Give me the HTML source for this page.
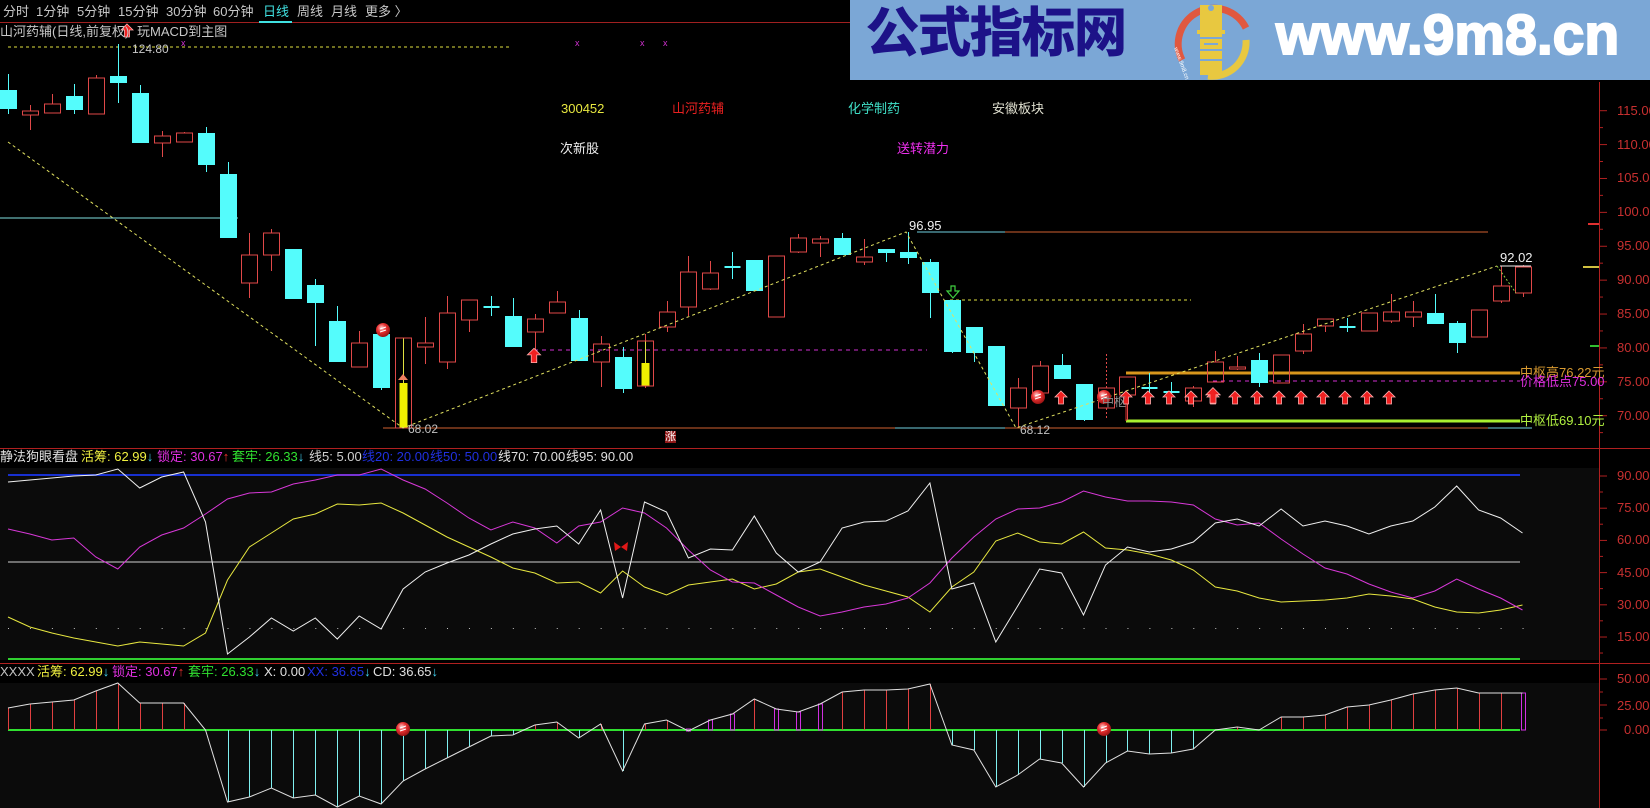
<!DOCTYPE html>
<html><head><meta charset="utf-8">
<style>
html,body{margin:0;padding:0;background:#000;width:1650px;height:808px;overflow:hidden;}
body{position:relative;font-family:"Liberation Sans","Noto Sans CJK SC",sans-serif;}
.t{position:absolute;white-space:nowrap;font-size:13px;line-height:14px;}
#svg{position:absolute;left:0;top:0;}
</style></head><body>
<svg id="svg" width="1650" height="808" xmlns="http://www.w3.org/2000/svg">
<defs>
<radialGradient id="ball" cx="0.4" cy="0.35" r="0.7"><stop offset="0" stop-color="#ffd0d0"/><stop offset="0.45" stop-color="#e83030"/><stop offset="1" stop-color="#901010"/></radialGradient>
</defs>
<g id="g"></g>
</svg>
<!-- toolbar -->
<div class="t" style="left:3px;top:5px;color:#c8c8c8">分时</div>
<div class="t" style="left:36px;top:5px;color:#c8c8c8">1分钟</div>
<div class="t" style="left:77px;top:5px;color:#c8c8c8">5分钟</div>
<div class="t" style="left:118px;top:5px;color:#c8c8c8">15分钟</div>
<div class="t" style="left:166px;top:5px;color:#c8c8c8">30分钟</div>
<div class="t" style="left:213px;top:5px;color:#c8c8c8">60分钟</div>
<div class="t" style="left:263px;top:5px;color:#40e0e0">日线</div>
<div class="t" style="left:297px;top:5px;color:#c8c8c8">周线</div>
<div class="t" style="left:331px;top:5px;color:#c8c8c8">月线</div>
<div class="t" style="left:365px;top:5px;color:#c8c8c8">更多 〉</div>
<div class="t" style="left:0px;top:25px;color:#c8c8c8">山河药辅(日线,前复权)</div>
<div class="t" style="left:137px;top:25px;color:#c8c8c8">玩MACD到主图</div>
<div class="t" style="left:132px;top:42px;color:#c8c8c8;font-size:12px">124.80</div>
<!-- banner -->
<div style="position:absolute;left:850px;top:0;width:800px;height:80px;background:#7ba7d6"></div>
<div class="t" style="left:866px;top:6px;color:#1d1288;font-size:53px;line-height:56px;font-weight:bold;letter-spacing:-1px;-webkit-text-stroke:1px #1d1288">公式指标网</div>
<div class="t" style="left:1276px;top:4px;color:#fff;font-size:57px;line-height:62px;font-weight:bold;-webkit-text-stroke:2px #fff">www.9m8.cn</div>
<svg style="position:absolute;left:0;top:0" width="1650" height="80" xmlns="http://www.w3.org/2000/svg">
<path d="M1182 60 A34 34 0 0 1 1246 28" fill="none" stroke="#e05840" stroke-width="7"/>
<path d="M1246 40 A34 34 0 0 1 1208 76" fill="none" stroke="#e8c840" stroke-width="7"/>
<rect x="1200" y="5" width="22" height="70" fill="#e8c840"/>
<circle cx="1211" cy="8" r="3" fill="#7ba7d6"/>
<rect x="1197" y="30" width="28" height="4" fill="#e8c840"/>
<path d="M1200 38 L1222 38 M1200 50 L1222 50 M1204 44 L1218 44 M1200 60 L1222 60" stroke="#7ba7d6" stroke-width="2"/>
<text x="1174" y="48" fill="#fff" font-size="6" font-family="Liberation Sans" transform="rotate(70 1174 48)">www.9m8.cn</text>
</svg>
<!-- info -->
<div class="t" style="left:561px;top:102px;color:#e8e840">300452</div>
<div class="t" style="left:672px;top:102px;color:#e82020">山河药辅</div>
<div class="t" style="left:848px;top:102px;color:#40e0c8">化学制药</div>
<div class="t" style="left:992px;top:102px;color:#e0e0d0">安徽板块</div>
<div class="t" style="left:560px;top:142px;color:#f0f0f0">次新股</div>
<div class="t" style="left:897px;top:142px;color:#f030f0">送转潜力</div>
<div class="t" style="left:909px;top:219px;color:#f0f0f0">96.95</div>
<div class="t" style="left:1500px;top:251px;color:#f0f0f0">92.02</div>
<div class="t" style="left:408px;top:422px;color:#c0c0c0;font-size:12px">68.02</div>
<div class="t" style="left:1020px;top:423px;color:#c0c0c0;font-size:12px">68.12</div>
<div class="t" style="left:1102px;top:395px;color:#909090;font-size:12px">中枢</div>
<div class="t" style="left:1520px;top:366px;color:#d89a30">中枢高76.22元</div>
<div class="t" style="left:1520px;top:375px;color:#e030e0">价格低点75.00</div>
<div class="t" style="left:1520px;top:414px;color:#b0f040">中枢低69.10元</div>
<div class="t" style="left:665px;top:431px;color:#fff;background:#901818;font-size:11px;line-height:12px">涨</div>
<!-- panel 2 header -->
<div class="t" style="left:0;top:450px;color:#e0e0e0">静法狗眼看盘</div>
<div class="t" style="left:81px;top:450px;color:#f0f040">活筹: 62.99<span style="color:#40d0f0">↓</span></div>
<div class="t" style="left:157px;top:450px;color:#e030e0">锁定: 30.67<span style="color:#f03030">↑</span></div>
<div class="t" style="left:232px;top:450px;color:#30e030">套牢: 26.33<span style="color:#40d0f0">↓</span></div>
<div class="t" style="left:309px;top:450px;color:#d0d0d0">线5: 5.00</div>
<div class="t" style="left:362px;top:450px;color:#2030e0">线20: 20.00</div>
<div class="t" style="left:430px;top:450px;color:#2030e0">线50: 50.00</div>
<div class="t" style="left:498px;top:450px;color:#e0e0e0">线70: 70.00</div>
<div class="t" style="left:566px;top:450px;color:#e0e0e0">线95: 90.00</div>
<!-- panel 3 header -->
<div class="t" style="left:0;top:665px;color:#c0c0c0">XXXX</div>
<div class="t" style="left:37px;top:665px;color:#f0f040">活筹: 62.99<span style="color:#40d0f0">↓</span></div>
<div class="t" style="left:112px;top:665px;color:#e030e0">锁定: 30.67<span style="color:#f03030">↑</span></div>
<div class="t" style="left:188px;top:665px;color:#30e030">套牢: 26.33<span style="color:#40d0f0">↓</span></div>
<div class="t" style="left:264px;top:665px;color:#e0e0e0">X: 0.00</div>
<div class="t" style="left:307px;top:665px;color:#2030e0">XX: 36.65<span style="color:#40d0f0">↓</span></div>
<div class="t" style="left:373px;top:665px;color:#e0e0e0">CD: 36.65<span style="color:#40d0f0">↓</span></div>
<div id="axl"></div>
<script>
var NS="http://www.w3.org/2000/svg",G=document.getElementById('g');
function el(n,a){var e=document.createElementNS(NS,n);for(var k in a)e.setAttribute(k,a[k]);G.appendChild(e);return e;}
function ln(x1,y1,x2,y2,c,w,d){var a={x1:x1,y1:y1,x2:x2,y2:y2,stroke:c,'stroke-width':w||1};if(d)a['stroke-dasharray']=d;return el('line',a);}
function pl(pts,c,w,d){var a={points:pts.map(function(p){return p.join(',')}).join(' '),fill:'none',stroke:c,'stroke-width':w||1};if(d)a['stroke-dasharray']=d;return el('polyline',a);}
function X(i){return 8+i*21.95;}
el('rect',{x:0,y:468,width:1599,height:192,fill:'#0b0b0b'});
el('rect',{x:0,y:683,width:1599,height:125,fill:'#0b0b0b'});
ln(0,22.5,850,22.5,'#a02020',1);
ln(259,22,292,22,'#40e0e0',2);
ln(0,448.5,1650,448.5,'#b02020',1);
ln(0,663.5,1650,663.5,'#b02020',1);
ln(1599.5,82,1599.5,808,'#b02020',1);
var ax=document.getElementById('axl'),h='';
function lab(y,t,x){h+='<div class="t" style="left:'+(x||1617)+'px;top:'+(y-7)+'px;color:#c83030;font-size:13px">'+t+'</div>';}
for(var p=115;p>=70;p-=5){var y=110.7+(115-p)*6.778;lab(y,p.toFixed(2));ln(1599,y,1607,y,'#b02020');ln(1599,y+16.9,1603,y+16.9,'#b02020');}
[90,75,60,45,30,15].forEach(function(v){var y=476+(90-v)*2.147;lab(y,v.toFixed(2));ln(1599,y,1607,y,'#b02020');ln(1599,y+16,1603,y+16,'#b02020');});
lab(679,'50.00');lab(706,'25.00');lab(730,'0.00',1624);
[679,705,730].forEach(function(y){ln(1599,y,1607,y,'#b02020');});ln(1599,692,1603,692,'#b02020');ln(1599,718,1603,718,'#b02020');
ax.innerHTML=h;
ln(1588,224,1599,224,'#e03030',2);ln(1583,267,1599,267,'#d0c040',2);ln(1590,346,1599,346,'#30c030',2);
ln(8,47,510,47,'#e0e040',1,'3,3');
ln(0,218,238,218,'#80e0e0',1);
ln(917,232,1005,232,'#70d0e0',1);ln(1005,232,1488,232,'#d06030',1);
ln(950,300,1191,300,'#e0e040',1,'3,3');
ln(534,350,927,350,'#d030d0',1,'4,4');
ln(383,428,895,428,'#d06030',1);ln(895,428,1005,428,'#70d0e0',1);ln(1005,428,1488,428,'#d06030',1);ln(1488,428,1532,428,'#70d0e0',1);
ln(1126,373,1520,373,'#d8961c',3);
ln(1213,381,1520,381,'#d030d0',1,'4,4');
ln(1126,421,1520,421,'#a8f030',3);
ln(1126,395,1126,421,'#e03030',1);
[184,578,643,666].forEach(function(x){el('text',{x:x-3,y:46,fill:'#d030d0','font-size':9,'font-family':'Liberation Sans'}).textContent='x';});
var C=[['d',90,109,74,114],['u',111,115,105,130],['u',104,113,94,113],['d',96,110,84,114],['u',78,114,75,114],['d',76,83,44,103],['d',93,143,85,143],['u',136,143,131,157],['u',133,142,132,142],['d',133,165,127,172],['d',174,238,162,238],['u',255,283,233,298],['u',233,255,229,271],['d',249,299,249,299],['d',285,303,279,346],['d',321,362,306,362],['u',343,367,331,367],['d',334,388,334,390],['y',338,428,338,428,383],['u',343,347,317,364],['u',313,362,296,369],['u',300,320,300,332],['c',307,307,296,316],['d',316,347,298,347],['u',319,332,314,350],['u',302,313,291,313],['d',318,361,310,361],['u',344,362,336,387],['d',357,389,347,393],['y',341,386,334,388,363],['u',312,327,301,332],['u',272,307,256,316],['u',273,289,261,290],['c',267,267,252,279],['d',260,291,260,291],['u',256,317,256,317],['u',238,252,234,253],['u',239,243,236,257],['d',238,255,233,255],['u',257,262,239,265],['d',249,253,249,262],['d',252,258,232,264],['d',262,293,259,318],['d',300,352,300,353],['d',327,353,327,362],['d',346,406,346,406],['u',388,408,378,427],['u',366,393,361,393],['d',365,379,354,379],['d',384,420,384,421],['u',388,408,354,420],['u',377,395,377,420],['c',388,388,373,395],['c',392,392,382,396],['u',388,401,386,407],['u',362,382,351,382],['u',367,369,356,370],['d',360,383,353,387],['u',355,383,355,383],['u',334,351,324,354],['u',319,326,319,332],['c',327,327,318,332],['u',313,331,313,331],['u',312,321,294,323],['u',312,317,301,327],['d',313,324,294,324],['d',323,343,321,353],['u',310,337,310,337],['u',286,301,266,303],['u',267,293,265,297]];
var R='#e04848',CY='#54fcfc';
C.forEach(function(c,i){var x=Math.round(X(i))+0.5,t=c[0];
 if(t=='d'){ln(x,c[3],x,c[4],CY);el('rect',{x:x-8.5,y:c[1],width:17,height:Math.max(1,c[2]-c[1]),fill:CY});}
 else if(t=='c'){ln(x,c[3],x,c[4],CY);ln(x-8,c[1],x+8,c[1],CY,2);}
 else{ if(c[3]<c[1])ln(x,c[3],x,c[1],R,1,i==50?'2,2':null); if(c[4]>c[2])ln(x,c[2],x,c[4],R,1,i==50?'2,2':null);
  if(t=='y'){ln(x,c[1],x,c[5],'#e0e040');el('rect',{x:x-4,y:c[5],width:8,height:c[2]-c[5],fill:'#f0f000'});}
  el('rect',{x:x-8,y:c[1],width:16,height:Math.max(2,c[2]-c[1]),fill:'none',stroke:R,'stroke-width':1});}
});
pl([[8,142],[403,428],[906,232],[1016,428],[1497,266]],'#e0e060',1,'3,3');
pl([[1497,266],[1516,293]],'#90d040',1,'2,2');
ln(1500,266,1531,266,'#f0f0f0',1);
function up(x,y,s){s=s||1;el('path',{d:'M'+x+' '+(y-7*s)+' L'+(x+6*s)+' '+(y-1*s)+' L'+(x+2.5*s)+' '+(y-1*s)+' L'+(x+2.5*s)+' '+(y+6*s)+' L'+(x-2.5*s)+' '+(y+6*s)+' L'+(x-2.5*s)+' '+(y-1*s)+' L'+(x-6*s)+' '+(y-1*s)+' Z',fill:'#f02020',stroke:'#ffb0b0','stroke-width':0.8});}
[1061,1148,1169,1191,1213,1235,1257,1279,1301,1323,1345,1367,1389].forEach(function(x){up(x,398);});
up(1126,398);up(1213,396,1.2);up(534,356,1.1);up(127,31,1);
el('path',{d:'M403 374 L408 380 L398 380 Z',fill:'#f08060'});
el('path',{d:'M951 286 L951 291 L947 291 L953 298 L959 291 L955 291 L955 286 Z',fill:'none',stroke:'#40d040','stroke-width':1.2});
function ball(x,y){el('circle',{cx:x,cy:y,r:7,fill:'url(#ball)'});el('path',{d:'M'+(x-3)+' '+(y-1)+' L'+(x+3)+' '+(y-3)+' M'+(x-3)+' '+(y+2)+' L'+(x+3)+' '+y,stroke:'#fff','stroke-width':1});}
ball(383,330);ball(1038,397);ball(1104,397);
ln(8,475,1520,475,'#1830d0',2);
ln(8,562,1520,562,'#d0d0d0',1);
ln(8,659,1520,659,'#30d030',2);
for(var i=0;i<70;i++)el('rect',{x:X(i),y:628,width:1,height:1,fill:'#c0c0c0'});
var W=[482,480,478,476,475,469,488,477,472,522,654,637,618,631,618,639,616,629,589,572,563,555,544,534,529,526,544,510,598,502,512,558,549,550,516,553,572,562,528,522,521,511,483,589,583,642,606,569,573,615,565,547,552,549,542,523,519,526,509,526,521,526,534,526,521,507,486,510,518,533];
var M=[529,534,540,538,557,569,547,535,528,514,499,493,492,484,480,475,475,469,480,489,503,518,530,522,528,543,526,522,508,513,528,550,570,582,583,595,607,616,612,607,604,598,583,558,537,519,509,508,502,491,497,501,501,502,505,519,525,523,539,554,568,574,584,592,598,591,579,589,598,610];
var Y=[617,627,633,638,642,646,642,644,646,633,580,547,533,519,514,504,505,503,513,525,537,547,557,568,573,583,582,593,571,587,595,585,582,579,589,584,572,569,577,585,591,597,612,587,572,541,533,542,544,532,548,550,554,560,570,587,591,598,602,601,600,598,594,596,599,607,612,613,610,605];
function P(a){return a.map(function(v,i){return [X(i).toFixed(1),v];});}
pl(P(Y),'#e8e840',1);pl(P(M),'#d838d8',1);pl(P(W),'#f0f0f0',1);
el('path',{d:'M621 547 L614 542 L615 551 Z M621 547 L628 542 L627 551 Z',fill:'#e01818'});
var D=[708,704,702,700,691,683,703,703,703,730,802,797,788,798,795,807,796,804,781,769,758,747,736,735,725,722,738,724,771,724,720,731,720,714,699,709,712,704,692,690,690,689,684,745,750,787,775,759,763,787,763,751,754,753,749,730,727,730,717,717,715,707,705,700,694,690,688,693,693,693];
var purple={31:1,32:1,33:1,35:1,36:1,37:1,69:1};
ln(8,730,1520,730,'#30e030',2);
D.forEach(function(v,i){var x=Math.round(X(i))+0.5;
 if(purple[i]){el('rect',{x:x-2,y:Math.min(v,729),width:4,height:Math.max(2,Math.abs(730-v)),fill:'none',stroke:'#d030e0','stroke-width':1});}
 else if(v<729)ln(x,v,x,730,'#e04040',1);else if(v>731)ln(x,730,x,v,'#80f0f0',1);});
pl(P(D),'#e0e0e0',1);
ball(403,729);ball(1104,729);
</script>
</body></html>
